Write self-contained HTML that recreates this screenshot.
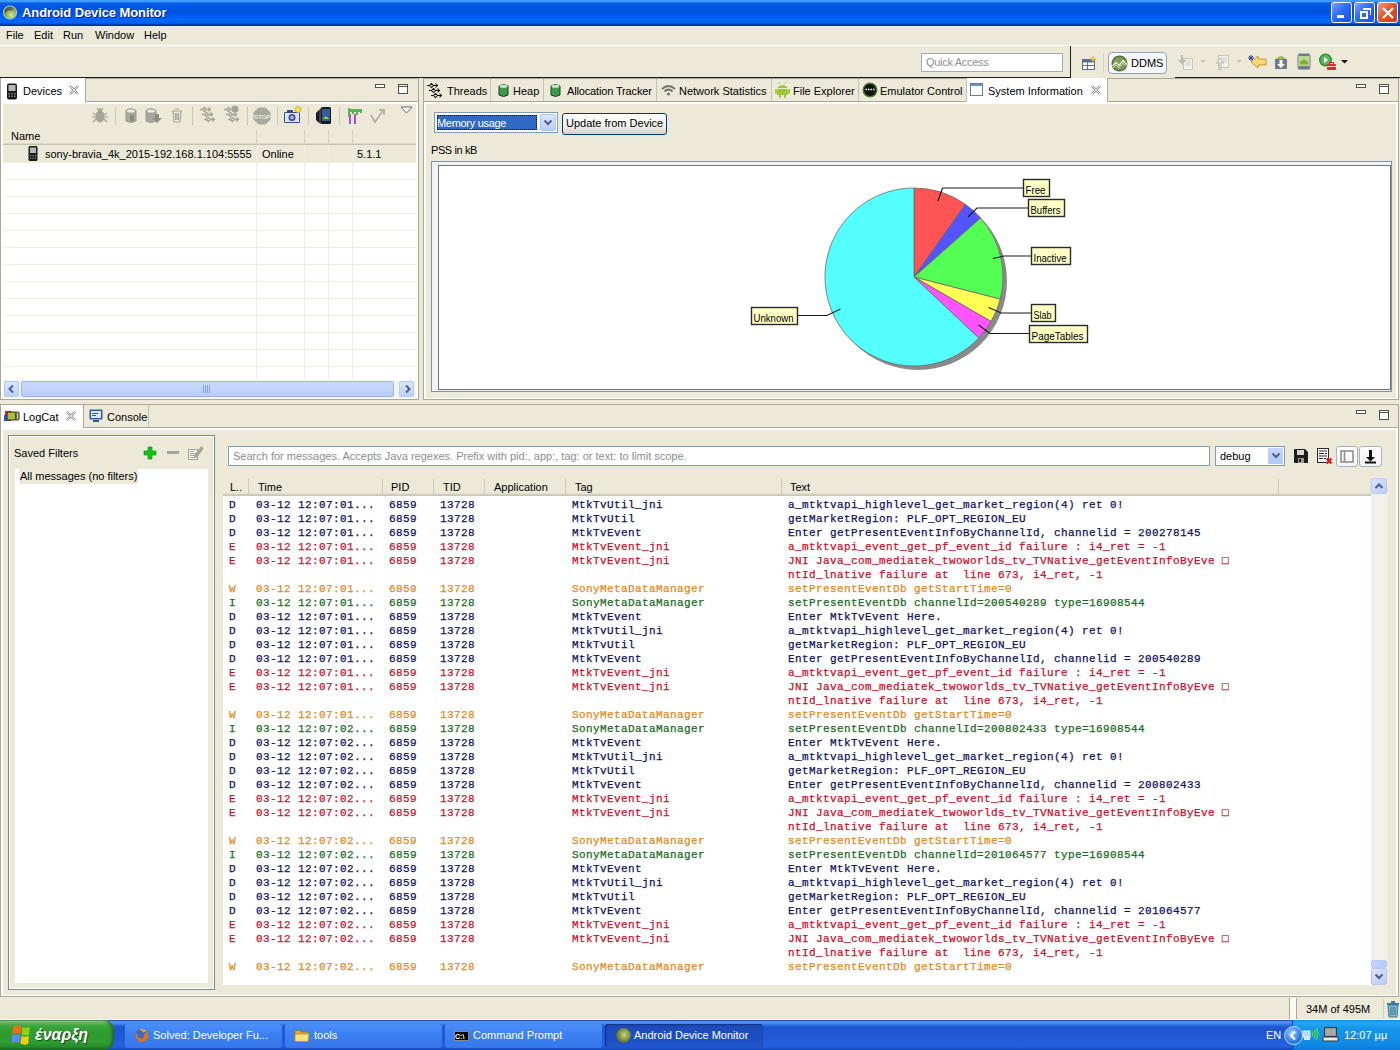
<!DOCTYPE html>
<html><head><meta charset="utf-8">
<style>
*{margin:0;padding:0;box-sizing:border-box}
html,body{width:1400px;height:1050px;overflow:hidden;background:#ECE9D8;font-family:"Liberation Sans",sans-serif;font-size:11px;color:#000;position:relative}
.a{position:absolute}
.t{position:absolute;white-space:nowrap;line-height:13px}
/* title bar */
#title{left:0;top:0;width:1400px;height:26px;background:linear-gradient(#3D9BFF 0px,#3D9BFF 1.5px,#0A60E6 3px,#0057E6 6px,#0052E0 12px,#005AF4 16px,#0066F6 19px,#0562F5 23px,#0046C8 24px,#0030A0 25px,#0030A0 26px)}
#title .tt{left:22px;top:6px;color:#fff;font-weight:bold;font-size:13px;text-shadow:1px 1px 0 #0A1E7A;letter-spacing:-0.1px}
.wb{position:absolute;top:2px;width:21px;height:21px;border:1px solid #fff;border-radius:3px;background:linear-gradient(135deg,#7AA4FF,#2D6CF5 45%,#1C4FE0)}
.wb.c{background:linear-gradient(135deg,#F09A80,#E0532B 50%,#C8401A)}
#menu{left:0;top:26px;width:1400px;height:20px;background:#ECE9D8;border-top:1px solid #F0F2FA;border-bottom:1px solid #fff}
#menu .t{top:2px}
#tb{left:0;top:46px;width:1400px;height:32px;background:#ECE9D8}

.pnl{position:absolute;border:1px solid #ACA899;border-top:none}
.tabrow{position:absolute;left:0;top:0;height:24px;border-bottom:1px solid #ACA899;background:#ECE9D8}
.tab{position:absolute;top:0;height:24px;background:#ECE9D8;border-right:1px solid #ACA899}
.tab.act{background:#fff;height:24px}
.tab .t{top:6px}
.minb{position:absolute;width:10px;height:4px;border:1px solid #505046;background:#fff}
.maxb{position:absolute;width:10px;height:10px;border:1px solid #505046;box-shadow:inset 0 1px 0 #fff,inset 0 2px 0 #505046;background:#fff}
.xx{position:absolute;width:9px;height:9px}
.gl{position:absolute;background:#EFEDE3}

.lc{position:absolute;white-space:pre;font-family:"Liberation Mono",monospace;font-size:11px;line-height:14px;letter-spacing:0.4px;-webkit-text-stroke:0.25px currentColor}
.D{color:#10105C}.E{color:#C8102A}.W{color:#E0891E}.I{color:#1A6A22}
</style></head><body>

<div id="title" class="a">
  <svg class="a" style="left:2px;top:4px" width="16" height="16"><defs><radialGradient id="gi" cx="0.6" cy="0.7" r="0.7"><stop offset="0" stop-color="#D8E8A0"/><stop offset="0.6" stop-color="#8AAA50"/><stop offset="1" stop-color="#2A4A20"/></radialGradient></defs><circle cx="8" cy="8.5" r="6.5" fill="url(#gi)" stroke="#9CD8A8" stroke-width="1.2"/><path d="M3 8Q6 4 10 6" stroke="#5A4A6A" stroke-width="1.5" fill="none"/></svg>
  <div class="t tt">Android Device Monitor</div>
  <div class="wb" style="left:1331px"><div class="a" style="left:5px;top:12px;width:7px;height:3px;background:#fff"></div></div>
  <div class="wb" style="left:1354px"><div class="a" style="left:5px;top:8px;width:8px;height:8px;border:2px solid #fff;border-top-width:2px"></div><div class="a" style="left:8px;top:5px;width:8px;height:7px;border-top:2px solid #fff;border-right:1px solid #fff"></div></div>
  <div class="wb c" style="left:1377px"><svg class="a" style="left:3px;top:3px" width="14" height="14"><path d="M2 2L12 12M12 2L2 12" stroke="#fff" stroke-width="2.2"/></svg></div>
</div>

<div id="menu" class="a">
  <div class="t" style="left:6px">File</div>
  <div class="t" style="left:34px">Edit</div>
  <div class="t" style="left:63px">Run</div>
  <div class="t" style="left:95px">Window</div>
  <div class="t" style="left:144px">Help</div>
</div>

<div id="tb" class="a">
  <div class="a" style="left:921px;top:7px;width:142px;height:19px;background:#fff;border:1px solid #A5ACB5"></div>
  <div class="t" style="left:926px;top:10px;color:#8F8F8F;letter-spacing:-0.3px">Quick Access</div>
  <div class="a" style="left:1070px;top:0px;width:1px;height:31px;background:#1A1A1A"></div>
  <svg class="a" style="left:1081px;top:10px" width="16" height="15"><rect x="1.5" y="3.5" width="12" height="10" fill="#fff" stroke="#6D6D6D"/><rect x="2" y="4" width="11" height="2.5" fill="#4A6FA8"/><path d="M1.5 9.5H13.5M6.5 6.5V13.5" stroke="#6D6D6D"/><path d="M12 0.5L13 2.5L15 3L13 3.8L12 6L11 3.8L9 3L11 2.5Z" fill="#F5D050" stroke="#D9A020" stroke-width="0.6"/></svg>
  <div class="a" style="left:1103px;top:7px;width:1px;height:20px;background:#D5D2C4"></div>
  <div class="a" style="left:1108px;top:6px;width:59px;height:22px;border:1px solid #94A2B8;border-radius:4px;background:#F6F8FB"></div>
  <svg class="a" style="left:1111px;top:9px" width="17" height="17"><circle cx="8.5" cy="8.5" r="8" fill="#4E6A2E"/><circle cx="8.5" cy="8.5" r="6.8" fill="#7D9A5A"/><path d="M1.5 11L5 7.5L8 10.5L12 5.5L16 9.5" stroke="#E8F0D8" stroke-width="1.3" fill="none"/><path d="M1.5 13.5L5 10L8 13L12 8L15.5 11.5" stroke="#C8D8B0" stroke-width="1" fill="none"/></svg>
  <div class="t" style="left:1131px;top:11px">DDMS</div>
  <svg class="a" style="left:1178px;top:8px" width="16" height="17"><rect x="5.5" y="4.5" width="9" height="11" fill="#F3F2EC" stroke="#C9C8BD"/><path d="M7 7H13M7 9H13M7 11H13" stroke="#D3D2C8"/><path d="M4 1V9L1 6M4 9L7 6" stroke="#BDBCB0" stroke-width="2" fill="none"/></svg>
  <svg class="a" style="left:1200px;top:14px" width="6" height="4"><path d="M0 0H6L3 3Z" fill="#C7C6BB"/></svg>
  <svg class="a" style="left:1214px;top:8px" width="16" height="17"><rect x="4.5" y="1.5" width="10" height="12" fill="#F3F2EC" stroke="#C9C8BD"/><path d="M7 4H13M7 6H13M7 8H13" stroke="#D3D2C8"/><path d="M5 16V9H2L6 4L10 9H7V16Z" fill="#E5E4DC" stroke="#BDBCB0"/></svg>
  <svg class="a" style="left:1236px;top:14px" width="6" height="4"><path d="M0 0H6L3 3Z" fill="#C7C6BB"/></svg>
  <svg class="a" style="left:1248px;top:9px" width="19" height="14"><path d="M18 4H10V1L3 7L10 13V10H18Z" fill="#F8D878" stroke="#C89A28" stroke-width="1"/><path d="M1 1L5 5M5 1L1 5M3 0V6M0 3H6" stroke="#2A3A9A" stroke-width="1"/></svg>
  <svg class="a" style="left:1274px;top:7px" width="14" height="17"><path d="M2 6Q7 0 12 6Z" fill="#9CC43C"/><rect x="1" y="6" width="12" height="10" fill="#6D7B8A"/><path d="M5.5 7H8.5V11H11L7 15L3 11H5.5Z" fill="#fff"/></svg>
  <svg class="a" style="left:1297px;top:7px" width="14" height="17"><rect x="0.5" y="0.5" width="13" height="16" rx="2" fill="#6D7B8A"/><rect x="2" y="3" width="10" height="10" fill="#BCD88A"/><path d="M3 9Q7 4 11 9Z" fill="#7FAE2A"/><rect x="3" y="9" width="8" height="2.5" fill="#7FAE2A"/><path d="M1 2H2M1 4H2M1 6H2M1 8H2M1 10H2M1 12H2M1 14H2M12 2H13M12 4H13M12 6H13M12 8H13M12 10H13M12 12H13M12 14H13" stroke="#DDD"/></svg>
  <svg class="a" style="left:1319px;top:7px" width="18" height="18"><circle cx="6.5" cy="7" r="6.5" fill="#2E8A3A"/><circle cx="6.5" cy="7" r="5" fill="#5AB85A"/><path d="M5 4L9 7L5 10Z" fill="#fff"/><rect x="8" y="11" width="9" height="6" rx="1" fill="#D82C2C"/><rect x="10.5" y="9.5" width="4" height="2" fill="none" stroke="#D82C2C"/><path d="M8 13.5H17" stroke="#fff" stroke-width="0.8"/></svg>
  <svg class="a" style="left:1341px;top:14px" width="7" height="4"><path d="M0 0H7L3.5 3.5Z" fill="#111"/></svg>
</div>


<!-- DEVICES PANEL -->
<div class="a" style="left:0;top:77px;width:1071px;height:1px;background:#1A1A1A"></div><div class="a" style="left:1175px;top:77px;width:225px;height:1px;background:#1A1A1A"></div>
<div class="a" style="left:0;top:78px;width:419px;height:322px;background:#ECE9D8">
  <div class="a" style="left:0;top:0;width:1px;height:322px;background:#ACA899"></div>
  <div class="a" style="left:418px;top:0;width:1px;height:322px;background:#ACA899"></div><div class="a" style="left:0;top:321px;width:419px;height:1px;background:#ACA899"></div>
  <div class="a" style="left:0;top:23px;width:419px;height:1px;background:#ACA899"></div>
  <div class="a" style="left:86px;top:0;width:333px;height:1px;background:#ACA899"></div><div class="a" style="left:1px;top:0;width:85px;height:24px;background:#fff;border-right:1px solid #ACA899"></div>
  <svg class="a" style="left:6px;top:5px" width="12" height="17"><rect x="1" y="0.5" width="10" height="16" rx="2" fill="#1a1a1a"/><rect x="2.5" y="2" width="7" height="6" fill="#B8B8B8"/><g fill="#888"><rect x="2.5" y="10" width="1.5" height="1.5"/><rect x="5.2" y="10" width="1.5" height="1.5"/><rect x="8" y="10" width="1.5" height="1.5"/><rect x="2.5" y="12.5" width="1.5" height="1.5"/><rect x="5.2" y="12.5" width="1.5" height="1.5"/><rect x="8" y="12.5" width="1.5" height="1.5"/></g></svg>
  <div class="t" style="left:23px;top:7px">Devices</div>
  <svg class="a" style="left:69px;top:7px" width="10" height="10"><path d="M1 1L9 9M9 1L1 9" stroke="#8A8A8A" stroke-width="2.4"/><path d="M1 1L9 9M9 1L1 9" stroke="#fff" stroke-width="0.9"/></svg>
  <div class="minb" style="left:375px;top:6px"></div>
  <div class="maxb" style="left:398px;top:6px"></div>
  <!-- content -->
  <div class="a" style="left:1px;top:24px;width:417px;height:297px;background:#FDFDFB"></div><div class="a" style="left:3px;top:26px;width:413px;height:294px;background:#ECE9D8"></div>
  <div id="devtb">
  <svg class="a" style="left:91px;top:29px" width="18" height="17"><g fill="#A4A396"><ellipse cx="9" cy="9.5" rx="4.5" ry="6"/><circle cx="9" cy="3.5" r="2.2"/></g><g stroke="#A4A396" stroke-width="1.2"><path d="M2 6L5 8M16 6L13 8M1 10H5M17 10H13M2 15L5 12M16 15L13 12M6 1L7.5 3M12 1L10.5 3"/></g></svg>
  <div class="a" style="left:115px;top:29px;width:1px;height:18px;background:#C9C6B8"></div>
  <svg class="a" style="left:124px;top:29px" width="14" height="17"><g fill="#A9A89C" stroke="#9A998C"><path d="M2 3.5Q7 0 12 3.5V14Q7 17 2 14Z"/></g><ellipse cx="7" cy="4" rx="4" ry="1.6" fill="#ECEBE3"/><rect x="6" y="8" width="4" height="6" fill="#8C8B7E"/></svg>
  <svg class="a" style="left:144px;top:29px" width="20" height="17"><g fill="#A9A89C" stroke="#9A998C"><path d="M2 3.5Q7 0 12 3.5V14Q7 17 2 14Z"/></g><ellipse cx="7" cy="4" rx="4" ry="1.6" fill="#ECEBE3"/><path d="M11 7H15V11H18L13 16L8 11H11Z" fill="#8E8D80"/></svg>
  <svg class="a" style="left:170px;top:29px" width="14" height="17"><g fill="none" stroke="#A9A89C" stroke-width="1.2"><path d="M2 4H12M3 4L4 15H10L11 4M5 2H9M5.5 6V13M7 6V13M8.5 6V13"/></g></svg>
  <div class="a" style="left:192px;top:29px;width:1px;height:18px;background:#C9C6B8"></div>
  <svg class="a" style="left:197px;top:26px" width="20" height="20"><path d="M3 5.5H5.5M5.5 5.5L7.5 3.5L9.5 5.5L7.5 7.5ZM9.5 5.5H14M11.5 3.5L13.5 5.5L11.5 7.5M5 10.5H7.5M7.5 10.5L9.5 8.5L11.5 10.5L9.5 12.5ZM11.5 10.5H16M13.5 8.5L15.5 10.5L13.5 12.5M7 15.5H9.5M9.5 15.5L11.5 13.5L13.5 15.5L11.5 17.5ZM13.5 15.5H18M15.5 13.5L17.5 15.5L15.5 17.5" fill="none" stroke="#A4A396" stroke-width="1.3"/></svg>
  <svg class="a" style="left:221px;top:26px" width="20" height="20"><path d="M3 5.5H5.5M5.5 5.5L7.5 3.5L9.5 5.5L7.5 7.5ZM9.5 5.5H14M11.5 3.5L13.5 5.5L11.5 7.5M5 10.5H7.5M7.5 10.5L9.5 8.5L11.5 10.5L9.5 12.5ZM11.5 10.5H16M13.5 8.5L15.5 10.5L13.5 12.5M7 15.5H9.5M9.5 15.5L11.5 13.5L13.5 15.5L11.5 17.5ZM13.5 15.5H18M15.5 13.5L17.5 15.5L15.5 17.5" fill="none" stroke="#A4A396" stroke-width="1.3"/><circle cx="14" cy="5" r="3.6" fill="#A4A396"/></svg>
  <div class="a" style="left:247px;top:29px;width:1px;height:18px;background:#C9C6B8"></div>
  <svg class="a" style="left:253px;top:29px" width="18" height="18"><path d="M5.5 0.5H12.5L17.5 5.5V12.5L12.5 17.5H5.5L0.5 12.5V5.5Z" fill="#A9A89C"/><text x="9" y="11.5" font-size="6" font-weight="bold" fill="#E8E7DF" text-anchor="middle" font-family="Liberation Sans">STOP</text></svg>
  <div class="a" style="left:277px;top:29px;width:1px;height:18px;background:#C9C6B8"></div>
  <svg class="a" style="left:283px;top:28px" width="19" height="18"><rect x="1" y="6" width="16" height="11" rx="1.5" fill="#3A4A8C"/><rect x="2" y="7" width="14" height="9" fill="#DDE2F2"/><circle cx="9" cy="11.5" r="3.5" fill="#3A4A8C"/><circle cx="9" cy="11.5" r="2" fill="#9CB2E4"/><rect x="4" y="4" width="6" height="2" fill="#3A4A8C"/><circle cx="15" cy="3.5" r="3" fill="#F2E24A" stroke="#C9A820" stroke-width="0.8"/></svg>
  <div class="a" style="left:308px;top:29px;width:1px;height:18px;background:#C9C6B8"></div>
  <svg class="a" style="left:315px;top:28px" width="17" height="19"><path d="M4 4L1 7V14L4 17Z" fill="#1E1E1E"/><path d="M6 2L4 4V17L6 18Z" fill="#444"/><rect x="6" y="1" width="10" height="17" rx="1.5" fill="#1A1A1A"/><rect x="7" y="3" width="8" height="12" fill="#2E5E9E"/><path d="M8 13Q11 8 14 13Z" fill="#9BD13C"/></svg>
  <div class="a" style="left:339px;top:29px;width:1px;height:18px;background:#C9C6B8"></div>
  <svg class="a" style="left:347px;top:29px" width="16" height="17"><g fill="#A64FCF"><rect x="2" y="7" width="2" height="10"/><rect x="7" y="7" width="2" height="10"/></g><g fill="#5AB25A"><rect x="1" y="2" width="14" height="3"/><rect x="1" y="1" width="2" height="9"/><rect x="5" y="2" width="2" height="5"/><rect x="9" y="2" width="2" height="6"/><rect x="13" y="2" width="2" height="4"/></g></svg>
  <svg class="a" style="left:369px;top:29px" width="17" height="17"><path d="M2 8L6 15L15 2M10 3H15V8" fill="none" stroke="#B5B4A8" stroke-width="1.8"/></svg>
  <svg class="a" style="left:400px;top:28px" width="13" height="8"><path d="M1 1H12L6.5 7Z" fill="#fff" stroke="#6B6B6B" stroke-width="1"/></svg>
</div>
  <!-- table -->
  <div class="a" style="left:3px;top:67px;width:413px;height:235px;background:#fff"></div>
  <div class="a" style="left:3px;top:50px;width:413px;height:17px;background:linear-gradient(#ECE9D8 0,#ECE9D8 15px,#DCD8C8 15px,#DCD8C8 16px,#C5C1B0 16px)"></div>
  <div class="t" style="left:11px;top:52px">Name</div>
  <div class="a" style="left:3px;top:67px;width:413px;height:17px;background:#ECE9D8"></div>
  <svg class="a" style="left:28px;top:68px" width="10" height="15"><rect x="0.5" y="0" width="9" height="15" rx="1.5" fill="#1a1a1a"/><rect x="2" y="1.5" width="6" height="5.5" fill="#B8B8B8"/><g fill="#888"><rect x="2" y="9" width="1.3" height="1.3"/><rect x="4.4" y="9" width="1.3" height="1.3"/><rect x="6.8" y="9" width="1.3" height="1.3"/><rect x="2" y="11.5" width="1.3" height="1.3"/><rect x="4.4" y="11.5" width="1.3" height="1.3"/><rect x="6.8" y="11.5" width="1.3" height="1.3"/></g></svg>
  <div class="t" style="left:45px;top:70px">sony-bravia_4k_2015-192.168.1.104:5555</div>
  <div class="t" style="left:262px;top:70px">Online</div>
  <div class="t" style="left:357px;top:70px">5.1.1</div>
  <div class="gl" style="left:3px;top:84px;width:413px;height:1px"></div>
<div class="gl" style="left:3px;top:101px;width:413px;height:1px"></div>
<div class="gl" style="left:3px;top:118px;width:413px;height:1px"></div>
<div class="gl" style="left:3px;top:135px;width:413px;height:1px"></div>
<div class="gl" style="left:3px;top:152px;width:413px;height:1px"></div>
<div class="gl" style="left:3px;top:169px;width:413px;height:1px"></div>
<div class="gl" style="left:3px;top:186px;width:413px;height:1px"></div>
<div class="gl" style="left:3px;top:203px;width:413px;height:1px"></div>
<div class="gl" style="left:3px;top:220px;width:413px;height:1px"></div>
<div class="gl" style="left:3px;top:237px;width:413px;height:1px"></div>
<div class="gl" style="left:3px;top:254px;width:413px;height:1px"></div>
<div class="gl" style="left:3px;top:271px;width:413px;height:1px"></div>
<div class="gl" style="left:3px;top:288px;width:413px;height:1px"></div>
<div class="gl" style="left:256px;top:67px;width:1px;height:235px"></div>
<div class="a" style="left:256px;top:52px;width:1px;height:13px;background:#D5D1C0"></div>
<div class="gl" style="left:304px;top:67px;width:1px;height:235px"></div>
<div class="a" style="left:304px;top:52px;width:1px;height:13px;background:#D5D1C0"></div>
<div class="gl" style="left:328px;top:67px;width:1px;height:235px"></div>
<div class="a" style="left:328px;top:52px;width:1px;height:13px;background:#D5D1C0"></div>
<div class="gl" style="left:352px;top:67px;width:1px;height:235px"></div>
<div class="a" style="left:352px;top:52px;width:1px;height:13px;background:#D5D1C0"></div>

  <!-- h scrollbar -->
  <div class="a" style="left:3px;top:302px;width:413px;height:18px;background:#F5F4EA"></div>
  <div class="a" style="left:4px;top:303px;width:15px;height:16px;border-radius:2px;background:linear-gradient(#DAE6FE,#BCD0F8);border:1px solid #B6C9F0"></div>
  <svg class="a" style="left:7px;top:306px" width="9" height="10"><path d="M6 1.5L2.5 5L6 8.5" stroke="#4D6185" stroke-width="2" fill="none"/></svg>
  <div class="a" style="left:21px;top:303px;width:373px;height:16px;border-radius:2px;background:linear-gradient(#C8D8FB,#B9CEF7);border:1px solid #9DB6EA"></div>
  <svg class="a" style="left:202px;top:307px" width="9" height="8"><path d="M1.5 0V8M3.5 0V8M5.5 0V8M7.5 0V8" stroke="#8AA5DB" stroke-width="1"/></svg>
  <div class="a" style="left:399px;top:303px;width:15px;height:16px;border-radius:2px;background:linear-gradient(#DAE6FE,#BCD0F8);border:1px solid #B6C9F0"></div>
  <svg class="a" style="left:403px;top:306px" width="9" height="10"><path d="M3 1.5L6.5 5L3 8.5" stroke="#4D6185" stroke-width="2" fill="none"/></svg>
</div>

<!-- SYSTEM INFO PANEL -->
<div class="a" style="left:423px;top:78px;width:976px;height:322px;background:#ECE9D8">
  <div class="a" style="left:0;top:0;width:1px;height:322px;background:#ACA899"></div>
  <div class="a" style="left:975px;top:0;width:1px;height:322px;background:#ACA899"></div><div class="a" style="left:0;top:321px;width:976px;height:1px;background:#ACA899"></div>
  <div class="a" style="left:0;top:23px;width:976px;height:1px;background:#ACA899"></div><div class="a" style="left:0;top:0;width:976px;height:1px;background:#ACA899"></div>
  <div class="a" style="left:67px;top:1px;width:1px;height:22px;background:#C5C2B2"></div>
  <div class="a" style="left:120px;top:1px;width:1px;height:22px;background:#C5C2B2"></div>
  <div class="a" style="left:233px;top:1px;width:1px;height:22px;background:#C5C2B2"></div>
  <div class="a" style="left:348px;top:1px;width:1px;height:22px;background:#C5C2B2"></div>
  <div class="a" style="left:435px;top:1px;width:1px;height:22px;background:#C5C2B2"></div>
  <div class="a" style="left:543px;top:0px;width:142px;height:24px;background:#fff;border-left:1px solid #C5C2B2;border-right:1px solid #ACA899"></div>
  <!-- threads icon -->
  <svg class="a" style="left:1px;top:2px" width="22" height="20"><path d="M3 5.5H5.5M5.5 5.5L7.5 3.5L9.5 5.5L7.5 7.5ZM9.5 5.5H14M11.5 3.5L13.5 5.5L11.5 7.5M5 10.5H7.5M7.5 10.5L9.5 8.5L11.5 10.5L9.5 12.5ZM11.5 10.5H16M13.5 8.5L15.5 10.5L13.5 12.5M7 15.5H9.5M9.5 15.5L11.5 13.5L13.5 15.5L11.5 17.5ZM13.5 15.5H18M15.5 13.5L17.5 15.5L15.5 17.5" fill="none" stroke="#111" stroke-width="1.05"/></svg>
  <div class="t" style="left:24px;top:7px">Threads</div>
  <svg class="a" style="left:75px;top:5px" width="11" height="15"><path d="M1 3Q5.5 0 10 3V12Q5.5 15 1 12Z" fill="#3D9A4A" stroke="#1F3F23"/><ellipse cx="5.5" cy="3.2" rx="4" ry="1.5" fill="#CDE9C9"/></svg>
  <div class="t" style="left:90px;top:7px">Heap</div>
  <svg class="a" style="left:127px;top:5px" width="11" height="15"><path d="M1 3Q5.5 0 10 3V12Q5.5 15 1 12Z" fill="#3D9A4A" stroke="#1F3F23"/><ellipse cx="5.5" cy="3.2" rx="4" ry="1.5" fill="#CDE9C9"/></svg>
  <div class="t" style="left:144px;top:7px;letter-spacing:-0.15px">Allocation Tracker</div>
  <svg class="a" style="left:238px;top:6px" width="15" height="12"><g fill="none" stroke="#6F6F6F" stroke-width="1.8"><path d="M1 5Q7.5 -1 14 5M3.5 7.5Q7.5 3.5 11.5 7.5"/></g><circle cx="7.5" cy="10" r="1.6" fill="#6F6F6F"/></svg>
  <div class="t" style="left:256px;top:7px">Network Statistics</div>
  <svg class="a" style="left:352px;top:3px" width="15" height="17"><g fill="#9CC63C"><path d="M2 7Q7.5 1 13 7Z"/><rect x="2" y="8" width="11" height="6" rx="1"/><rect x="0" y="8" width="1.8" height="5" rx="0.9"/><rect x="13.2" y="8" width="1.8" height="5" rx="0.9"/><rect x="4" y="13" width="2" height="4" rx="1"/><rect x="9" y="13" width="2" height="4" rx="1"/></g><path d="M4 1L5 3M11 1L10 3" stroke="#9CC63C"/></svg>
  <div class="t" style="left:370px;top:7px">File Explorer</div>
  <svg class="a" style="left:439px;top:4px" width="16" height="16"><circle cx="8" cy="8" r="7.5" fill="#4E7A2C"/><circle cx="8" cy="8" r="6" fill="#111"/><path d="M3.5 7.5H12.5" stroke="#fff" stroke-width="1.4" stroke-dasharray="1.5 1"/></svg>
  <div class="t" style="left:457px;top:7px">Emulator Control</div>
  <svg class="a" style="left:547px;top:5px" width="14" height="14"><rect x="0.5" y="0.5" width="12" height="12" fill="#fff" stroke="#5E7FA8"/><rect x="1" y="1" width="11" height="2" fill="#6D8FBE"/></svg>
  <div class="t" style="left:565px;top:7px">System Information</div>
  <svg class="a" style="left:668px;top:7px" width="10" height="10"><path d="M1 1L9 9M9 1L1 9" stroke="#8A8A8A" stroke-width="2.4"/><path d="M1 1L9 9M9 1L1 9" stroke="#fff" stroke-width="0.9"/></svg>
  <div class="minb" style="left:933px;top:6px"></div>
  <div class="maxb" style="left:956px;top:6px"></div>
  <div class="a" style="left:1px;top:24px;width:974px;height:297px;background:#FDFDFB"></div>
  <div class="a" style="left:3px;top:26px;width:970px;height:294px;background:#ECE9D8"></div>
  <!-- combo -->
  <div class="a" style="left:11px;top:34px;width:124px;height:21px;background:#fff;border:1px solid #7F9DB9"></div>
  <div class="a" style="left:14px;top:37px;width:100px;height:15px;background:#316AC5;outline:1px dotted #000;outline-offset:-1px"></div>
  <div class="t" style="left:14px;top:39px;color:#fff;letter-spacing:-0.3px">Memory usage</div>
  <div class="a" style="left:117px;top:36px;width:16px;height:17px;border-radius:2px;background:linear-gradient(#DCE7FE,#B9CDF8);border:1px solid #B4C6EE"></div>
  <svg class="a" style="left:120px;top:41px" width="10" height="8"><path d="M1.5 1.5L5 5L8.5 1.5" stroke="#4D6185" stroke-width="2" fill="none"/></svg>
  <div class="a" style="left:139px;top:35px;width:105px;height:22px;border:1px solid #003C74;border-radius:3px;background:linear-gradient(#FFFFFF,#F0F0EA 60%,#D6D0C5)"></div>
  <div class="t" style="left:143px;top:39px">Update from Device</div>
  <div class="t" style="left:8px;top:66px;letter-spacing:-0.4px">PSS in kB</div>
  <!-- chart frame -->
  <div class="a" style="left:8px;top:83px;width:961px;height:231px;border:1px solid #8592A6;background:#F1F3F6"></div>
  <div class="a" style="left:15px;top:87px;width:953px;height:225px;border:1px solid #6E737C;background:#fff"></div>
</div>

<!-- LOGCAT PANEL -->
<div class="a" style="left:0;top:404px;width:1400px;height:593px;background:#ECE9D8">
  <div class="a" style="left:0;top:0;width:1px;height:593px;background:#ACA899"></div>
  <div class="a" style="left:1398px;top:0;width:1px;height:593px;background:#ACA899"></div>
  <div class="a" style="left:0;top:592px;width:1399px;height:1px;background:#ACA899"></div>
  <div class="a" style="left:0;top:0;width:1399px;height:1px;background:#ACA899"></div>
  <div class="a" style="left:0;top:23px;width:1399px;height:1px;background:#ACA899"></div>
  <div class="a" style="left:1px;top:1px;width:83px;height:23px;background:#fff;border-right:1px solid #ACA899"></div>
  <div class="a" style="left:148px;top:1px;width:1px;height:22px;background:#C5C2B2"></div>
  <svg class="a" style="left:4px;top:6px" width="16" height="12"><rect x="1" y="1" width="6" height="10" fill="#D92020"/><rect x="0" y="5" width="4" height="6" fill="#2A52C8"/><rect x="3" y="2" width="9" height="8" rx="1" fill="#A4C23A" stroke="#222"/><rect x="12" y="2" width="3" height="8" rx="1" fill="#D9C27A" stroke="#222"/></svg>
  <div class="t" style="left:23px;top:7px">LogCat</div>
  <svg class="a" style="left:66px;top:7px" width="10" height="10"><path d="M1 1L9 9M9 1L1 9" stroke="#8A8A8A" stroke-width="2.4"/><path d="M1 1L9 9M9 1L1 9" stroke="#fff" stroke-width="0.9"/></svg>
  <svg class="a" style="left:89px;top:5px" width="14" height="14"><rect x="0.5" y="0.5" width="13" height="10" rx="1" fill="#2B5FA8"/><rect x="2" y="2" width="10" height="7" fill="#DCE6F4"/><rect x="3" y="4" width="6" height="1" fill="#2B5FA8"/><rect x="3" y="6" width="4" height="1" fill="#2B5FA8"/><rect x="4" y="11" width="6" height="2" fill="#2B5FA8"/></svg>
  <div class="t" style="left:107px;top:7px">Console</div>
  <div class="minb" style="left:1356px;top:6px"></div>
  <div class="maxb" style="left:1379px;top:6px"></div>
  <div class="a" style="left:1px;top:24px;width:1397px;height:568px;background:#FDFDFB"></div>
  <div class="a" style="left:3px;top:26px;width:1393px;height:565px;background:#ECE9D8"></div>
  <!-- saved filters -->
  <div class="a" style="left:8px;top:31px;width:207px;height:555px;border:1px solid #7E8691;box-shadow:inset 1px 1px 0 #fff,inset -1px -1px 0 #fff"></div>
  <div class="t" style="left:14px;top:43px">Saved Filters</div>
  <svg class="a" style="left:143px;top:42px" width="14" height="14"><path d="M5 1H9V5H13V9H9V13H5V9H1V5H5Z" fill="#17C117" stroke="#0A8A0A" stroke-width="0.6"/></svg>
  <div class="a" style="left:167px;top:47px;width:12px;height:3px;background:#A5A498"></div>
  <svg class="a" style="left:187px;top:40px" width="18" height="18"><rect x="1.5" y="5.5" width="9" height="10" fill="#F4F3EC" stroke="#A5A498"/><path d="M3 7.5H7M3 9.5H9M3 11.5H9M3 13.5H8" stroke="#A5A498"/><path d="M9 12L14.5 4.5" stroke="#A5A498" stroke-width="3.6" stroke-linecap="round"/></svg>
  <div class="a" style="left:15px;top:65px;width:193px;height:514px;background:#fff"></div>
  <div class="a" style="left:19px;top:65px;width:119px;height:15px;background:#ECE9D8"></div>
  <div class="t" style="left:20px;top:66px">All messages (no filters)</div>
  <!-- search -->
  <div class="a" style="left:228px;top:42px;width:982px;height:20px;background:#fff;border:1px solid #7F9DB9"></div>
  <div class="t" style="left:233px;top:46px;color:#8D8D8D">Search for messages. Accepts Java regexes. Prefix with pid:, app:, tag: or text: to limit scope.</div>
  <div class="a" style="left:1215px;top:42px;width:70px;height:20px;background:#fff;border:1px solid #7F9DB9"></div>
  <div class="t" style="left:1220px;top:46px">debug</div>
  <div class="a" style="left:1268px;top:44px;width:15px;height:16px;border-radius:1px;background:linear-gradient(#C6D6FA,#B3C8F5)"></div>
  <svg class="a" style="left:1271px;top:48px" width="10" height="8"><path d="M1.5 1.5L5 5L8.5 1.5" stroke="#4D6185" stroke-width="2" fill="none"/></svg>
  <svg class="a" style="left:1293px;top:44px" width="16" height="16"><path d="M1 2Q1 1 2 1H12L15 4V14Q15 15 14 15H2Q1 15 1 14Z" fill="#1E1E1E"/><rect x="4" y="2" width="7" height="5" fill="#D8D8D8"/><rect x="5" y="10" width="6" height="5" fill="#9A9A9A"/><rect x="6" y="11" width="2" height="3" fill="#1E1E1E"/></svg>
  <svg class="a" style="left:1316px;top:43px" width="17" height="18"><rect x="1.5" y="1.5" width="11" height="14" fill="#fff" stroke="#2A2A2A"/><path d="M3 4H11M3 6.5H8M9 6.5H11M3 9H11M3 11.5H7M8 11.5H10" stroke="#2A2A2A" stroke-width="1.2"/><path d="M10.5 11.5L15.5 16.5M15.5 11.5L10.5 16.5" stroke="#E01818" stroke-width="2.2"/></svg>
  <div class="a" style="left:1336px;top:42px;width:22px;height:21px;border:1px solid #A7B1C2;border-radius:3px;background:linear-gradient(#FFFFFF,#F2F2F2)"></div>
  <svg class="a" style="left:1340px;top:46px" width="14" height="13"><rect x="1" y="1" width="12" height="11" fill="none" stroke="#8F8F8F" stroke-width="1.6"/><path d="M4.5 1V12" stroke="#8F8F8F" stroke-width="1.6"/></svg>
  <div class="a" style="left:1359px;top:42px;width:23px;height:21px;border:1px solid #A7B1C2;border-radius:3px;background:linear-gradient(#FFFFFF,#F2F2F2)"></div>
  <svg class="a" style="left:1363px;top:45px" width="15" height="15"><path d="M6 1H9V8H12L7.5 12.5L3 8H6Z" fill="#111"/><rect x="2" y="12.5" width="11" height="2" fill="#111"/></svg>
  <!-- table header -->
  <div class="a" style="left:223px;top:73px;width:1148px;height:19px;background:linear-gradient(#ECE9D8 0,#ECE9D8 16px,#D8D4C4 17px,#C5C1B0 19px)"></div>
  <div class="t" style="left:230px;top:77px">L..</div><div class="t" style="left:258px;top:77px">Time</div><div class="t" style="left:391px;top:77px">PID</div><div class="t" style="left:443px;top:77px">TID</div><div class="t" style="left:494px;top:77px">Application</div><div class="t" style="left:575px;top:77px">Tag</div><div class="t" style="left:790px;top:77px">Text</div><div class="a" style="left:248px;top:75px;width:1px;height:15px;background:#CFCBBA"></div><div class="a" style="left:382px;top:75px;width:1px;height:15px;background:#CFCBBA"></div><div class="a" style="left:433px;top:75px;width:1px;height:15px;background:#CFCBBA"></div><div class="a" style="left:484px;top:75px;width:1px;height:15px;background:#CFCBBA"></div><div class="a" style="left:565px;top:75px;width:1px;height:15px;background:#CFCBBA"></div><div class="a" style="left:781px;top:75px;width:1px;height:15px;background:#CFCBBA"></div><div class="a" style="left:1278px;top:75px;width:1px;height:15px;background:#CFCBBA"></div>
  <div class="a" style="left:223px;top:92px;width:1148px;height:489px;background:#fff"></div>
  <!-- v scrollbar -->
  <div class="a" style="left:1371px;top:73px;width:16px;height:508px;background:#F3F1EA"></div>
  <div class="a" style="left:1371px;top:74px;width:16px;height:16px;border:1px solid #B8C8EE;border-radius:2px;background:linear-gradient(135deg,#DCE6FD,#B8CCF6)"></div>
  <svg class="a" style="left:1374px;top:78px" width="10" height="8"><path d="M1.5 6L5 2.5L8.5 6" stroke="#4D6185" stroke-width="2" fill="none"/></svg>
  <div class="a" style="left:1371px;top:556px;width:16px;height:8px;border:1px solid #B8C8EE;border-radius:2px;background:linear-gradient(90deg,#C6D5F8,#B7CBF5)"></div>
  <div class="a" style="left:1371px;top:564px;width:16px;height:17px;border:1px solid #B8C8EE;border-radius:2px;background:linear-gradient(135deg,#DCE6FD,#B8CCF6)"></div>
  <svg class="a" style="left:1374px;top:569px" width="10" height="8"><path d="M1.5 1.5L5 5L8.5 1.5" stroke="#4D6185" stroke-width="2" fill="none"/></svg>
  <div class="lc D" style="left:229px;top:94px">D</div><div class="lc D" style="left:256px;top:94px">03-12 12:07:01...</div><div class="lc D" style="left:389px;top:94px">6859</div><div class="lc D" style="left:440px;top:94px">13728</div><div class="lc D" style="left:572px;top:94px">MtkTvUtil_jni</div><div class="lc D" style="left:788px;top:94px">a_mtktvapi_highlevel_get_market_region(4) ret 0!</div>
<div class="lc D" style="left:229px;top:108px">D</div><div class="lc D" style="left:256px;top:108px">03-12 12:07:01...</div><div class="lc D" style="left:389px;top:108px">6859</div><div class="lc D" style="left:440px;top:108px">13728</div><div class="lc D" style="left:572px;top:108px">MtkTvUtil</div><div class="lc D" style="left:788px;top:108px">getMarketRegion: PLF_OPT_REGION_EU</div>
<div class="lc D" style="left:229px;top:122px">D</div><div class="lc D" style="left:256px;top:122px">03-12 12:07:01...</div><div class="lc D" style="left:389px;top:122px">6859</div><div class="lc D" style="left:440px;top:122px">13728</div><div class="lc D" style="left:572px;top:122px">MtkTvEvent</div><div class="lc D" style="left:788px;top:122px">Enter getPresentEventInfoByChannelId, channelid = 200278145</div>
<div class="lc E" style="left:229px;top:136px">E</div><div class="lc E" style="left:256px;top:136px">03-12 12:07:01...</div><div class="lc E" style="left:389px;top:136px">6859</div><div class="lc E" style="left:440px;top:136px">13728</div><div class="lc E" style="left:572px;top:136px">MtkTvEvent_jni</div><div class="lc E" style="left:788px;top:136px">a_mtktvapi_event_get_pf_event_id failure : i4_ret = -1</div>
<div class="lc E" style="left:229px;top:150px">E</div><div class="lc E" style="left:256px;top:150px">03-12 12:07:01...</div><div class="lc E" style="left:389px;top:150px">6859</div><div class="lc E" style="left:440px;top:150px">13728</div><div class="lc E" style="left:572px;top:150px">MtkTvEvent_jni</div><div class="lc E" style="left:788px;top:150px">JNI Java_com_mediatek_twoworlds_tv_TVNative_getEventInfoByEve □</div>
<div class="lc E" style="left:788px;top:164px">ntId_lnative failure at  line 673, i4_ret, -1</div>
<div class="lc W" style="left:229px;top:178px">W</div><div class="lc W" style="left:256px;top:178px">03-12 12:07:01...</div><div class="lc W" style="left:389px;top:178px">6859</div><div class="lc W" style="left:440px;top:178px">13728</div><div class="lc W" style="left:572px;top:178px">SonyMetaDataManager</div><div class="lc W" style="left:788px;top:178px">setPresentEventDb getStartTime=0</div>
<div class="lc I" style="left:229px;top:192px">I</div><div class="lc I" style="left:256px;top:192px">03-12 12:07:01...</div><div class="lc I" style="left:389px;top:192px">6859</div><div class="lc I" style="left:440px;top:192px">13728</div><div class="lc I" style="left:572px;top:192px">SonyMetaDataManager</div><div class="lc I" style="left:788px;top:192px">setPresentEventDb channelId=200540289 type=16908544</div>
<div class="lc D" style="left:229px;top:206px">D</div><div class="lc D" style="left:256px;top:206px">03-12 12:07:01...</div><div class="lc D" style="left:389px;top:206px">6859</div><div class="lc D" style="left:440px;top:206px">13728</div><div class="lc D" style="left:572px;top:206px">MtkTvEvent</div><div class="lc D" style="left:788px;top:206px">Enter MtkTvEvent Here.</div>
<div class="lc D" style="left:229px;top:220px">D</div><div class="lc D" style="left:256px;top:220px">03-12 12:07:01...</div><div class="lc D" style="left:389px;top:220px">6859</div><div class="lc D" style="left:440px;top:220px">13728</div><div class="lc D" style="left:572px;top:220px">MtkTvUtil_jni</div><div class="lc D" style="left:788px;top:220px">a_mtktvapi_highlevel_get_market_region(4) ret 0!</div>
<div class="lc D" style="left:229px;top:234px">D</div><div class="lc D" style="left:256px;top:234px">03-12 12:07:01...</div><div class="lc D" style="left:389px;top:234px">6859</div><div class="lc D" style="left:440px;top:234px">13728</div><div class="lc D" style="left:572px;top:234px">MtkTvUtil</div><div class="lc D" style="left:788px;top:234px">getMarketRegion: PLF_OPT_REGION_EU</div>
<div class="lc D" style="left:229px;top:248px">D</div><div class="lc D" style="left:256px;top:248px">03-12 12:07:01...</div><div class="lc D" style="left:389px;top:248px">6859</div><div class="lc D" style="left:440px;top:248px">13728</div><div class="lc D" style="left:572px;top:248px">MtkTvEvent</div><div class="lc D" style="left:788px;top:248px">Enter getPresentEventInfoByChannelId, channelid = 200540289</div>
<div class="lc E" style="left:229px;top:262px">E</div><div class="lc E" style="left:256px;top:262px">03-12 12:07:01...</div><div class="lc E" style="left:389px;top:262px">6859</div><div class="lc E" style="left:440px;top:262px">13728</div><div class="lc E" style="left:572px;top:262px">MtkTvEvent_jni</div><div class="lc E" style="left:788px;top:262px">a_mtktvapi_event_get_pf_event_id failure : i4_ret = -1</div>
<div class="lc E" style="left:229px;top:276px">E</div><div class="lc E" style="left:256px;top:276px">03-12 12:07:01...</div><div class="lc E" style="left:389px;top:276px">6859</div><div class="lc E" style="left:440px;top:276px">13728</div><div class="lc E" style="left:572px;top:276px">MtkTvEvent_jni</div><div class="lc E" style="left:788px;top:276px">JNI Java_com_mediatek_twoworlds_tv_TVNative_getEventInfoByEve □</div>
<div class="lc E" style="left:788px;top:290px">ntId_lnative failure at  line 673, i4_ret, -1</div>
<div class="lc W" style="left:229px;top:304px">W</div><div class="lc W" style="left:256px;top:304px">03-12 12:07:01...</div><div class="lc W" style="left:389px;top:304px">6859</div><div class="lc W" style="left:440px;top:304px">13728</div><div class="lc W" style="left:572px;top:304px">SonyMetaDataManager</div><div class="lc W" style="left:788px;top:304px">setPresentEventDb getStartTime=0</div>
<div class="lc I" style="left:229px;top:318px">I</div><div class="lc I" style="left:256px;top:318px">03-12 12:07:02...</div><div class="lc I" style="left:389px;top:318px">6859</div><div class="lc I" style="left:440px;top:318px">13728</div><div class="lc I" style="left:572px;top:318px">SonyMetaDataManager</div><div class="lc I" style="left:788px;top:318px">setPresentEventDb channelId=200802433 type=16908544</div>
<div class="lc D" style="left:229px;top:332px">D</div><div class="lc D" style="left:256px;top:332px">03-12 12:07:02...</div><div class="lc D" style="left:389px;top:332px">6859</div><div class="lc D" style="left:440px;top:332px">13728</div><div class="lc D" style="left:572px;top:332px">MtkTvEvent</div><div class="lc D" style="left:788px;top:332px">Enter MtkTvEvent Here.</div>
<div class="lc D" style="left:229px;top:346px">D</div><div class="lc D" style="left:256px;top:346px">03-12 12:07:02...</div><div class="lc D" style="left:389px;top:346px">6859</div><div class="lc D" style="left:440px;top:346px">13728</div><div class="lc D" style="left:572px;top:346px">MtkTvUtil_jni</div><div class="lc D" style="left:788px;top:346px">a_mtktvapi_highlevel_get_market_region(4) ret 0!</div>
<div class="lc D" style="left:229px;top:360px">D</div><div class="lc D" style="left:256px;top:360px">03-12 12:07:02...</div><div class="lc D" style="left:389px;top:360px">6859</div><div class="lc D" style="left:440px;top:360px">13728</div><div class="lc D" style="left:572px;top:360px">MtkTvUtil</div><div class="lc D" style="left:788px;top:360px">getMarketRegion: PLF_OPT_REGION_EU</div>
<div class="lc D" style="left:229px;top:374px">D</div><div class="lc D" style="left:256px;top:374px">03-12 12:07:02...</div><div class="lc D" style="left:389px;top:374px">6859</div><div class="lc D" style="left:440px;top:374px">13728</div><div class="lc D" style="left:572px;top:374px">MtkTvEvent</div><div class="lc D" style="left:788px;top:374px">Enter getPresentEventInfoByChannelId, channelid = 200802433</div>
<div class="lc E" style="left:229px;top:388px">E</div><div class="lc E" style="left:256px;top:388px">03-12 12:07:02...</div><div class="lc E" style="left:389px;top:388px">6859</div><div class="lc E" style="left:440px;top:388px">13728</div><div class="lc E" style="left:572px;top:388px">MtkTvEvent_jni</div><div class="lc E" style="left:788px;top:388px">a_mtktvapi_event_get_pf_event_id failure : i4_ret = -1</div>
<div class="lc E" style="left:229px;top:402px">E</div><div class="lc E" style="left:256px;top:402px">03-12 12:07:02...</div><div class="lc E" style="left:389px;top:402px">6859</div><div class="lc E" style="left:440px;top:402px">13728</div><div class="lc E" style="left:572px;top:402px">MtkTvEvent_jni</div><div class="lc E" style="left:788px;top:402px">JNI Java_com_mediatek_twoworlds_tv_TVNative_getEventInfoByEve □</div>
<div class="lc E" style="left:788px;top:416px">ntId_lnative failure at  line 673, i4_ret, -1</div>
<div class="lc W" style="left:229px;top:430px">W</div><div class="lc W" style="left:256px;top:430px">03-12 12:07:02...</div><div class="lc W" style="left:389px;top:430px">6859</div><div class="lc W" style="left:440px;top:430px">13728</div><div class="lc W" style="left:572px;top:430px">SonyMetaDataManager</div><div class="lc W" style="left:788px;top:430px">setPresentEventDb getStartTime=0</div>
<div class="lc I" style="left:229px;top:444px">I</div><div class="lc I" style="left:256px;top:444px">03-12 12:07:02...</div><div class="lc I" style="left:389px;top:444px">6859</div><div class="lc I" style="left:440px;top:444px">13728</div><div class="lc I" style="left:572px;top:444px">SonyMetaDataManager</div><div class="lc I" style="left:788px;top:444px">setPresentEventDb channelId=201064577 type=16908544</div>
<div class="lc D" style="left:229px;top:458px">D</div><div class="lc D" style="left:256px;top:458px">03-12 12:07:02...</div><div class="lc D" style="left:389px;top:458px">6859</div><div class="lc D" style="left:440px;top:458px">13728</div><div class="lc D" style="left:572px;top:458px">MtkTvEvent</div><div class="lc D" style="left:788px;top:458px">Enter MtkTvEvent Here.</div>
<div class="lc D" style="left:229px;top:472px">D</div><div class="lc D" style="left:256px;top:472px">03-12 12:07:02...</div><div class="lc D" style="left:389px;top:472px">6859</div><div class="lc D" style="left:440px;top:472px">13728</div><div class="lc D" style="left:572px;top:472px">MtkTvUtil_jni</div><div class="lc D" style="left:788px;top:472px">a_mtktvapi_highlevel_get_market_region(4) ret 0!</div>
<div class="lc D" style="left:229px;top:486px">D</div><div class="lc D" style="left:256px;top:486px">03-12 12:07:02...</div><div class="lc D" style="left:389px;top:486px">6859</div><div class="lc D" style="left:440px;top:486px">13728</div><div class="lc D" style="left:572px;top:486px">MtkTvUtil</div><div class="lc D" style="left:788px;top:486px">getMarketRegion: PLF_OPT_REGION_EU</div>
<div class="lc D" style="left:229px;top:500px">D</div><div class="lc D" style="left:256px;top:500px">03-12 12:07:02...</div><div class="lc D" style="left:389px;top:500px">6859</div><div class="lc D" style="left:440px;top:500px">13728</div><div class="lc D" style="left:572px;top:500px">MtkTvEvent</div><div class="lc D" style="left:788px;top:500px">Enter getPresentEventInfoByChannelId, channelid = 201064577</div>
<div class="lc E" style="left:229px;top:514px">E</div><div class="lc E" style="left:256px;top:514px">03-12 12:07:02...</div><div class="lc E" style="left:389px;top:514px">6859</div><div class="lc E" style="left:440px;top:514px">13728</div><div class="lc E" style="left:572px;top:514px">MtkTvEvent_jni</div><div class="lc E" style="left:788px;top:514px">a_mtktvapi_event_get_pf_event_id failure : i4_ret = -1</div>
<div class="lc E" style="left:229px;top:528px">E</div><div class="lc E" style="left:256px;top:528px">03-12 12:07:02...</div><div class="lc E" style="left:389px;top:528px">6859</div><div class="lc E" style="left:440px;top:528px">13728</div><div class="lc E" style="left:572px;top:528px">MtkTvEvent_jni</div><div class="lc E" style="left:788px;top:528px">JNI Java_com_mediatek_twoworlds_tv_TVNative_getEventInfoByEve □</div>
<div class="lc E" style="left:788px;top:542px">ntId_lnative failure at  line 673, i4_ret, -1</div>
<div class="lc W" style="left:229px;top:556px">W</div><div class="lc W" style="left:256px;top:556px">03-12 12:07:02...</div><div class="lc W" style="left:389px;top:556px">6859</div><div class="lc W" style="left:440px;top:556px">13728</div><div class="lc W" style="left:572px;top:556px">SonyMetaDataManager</div><div class="lc W" style="left:788px;top:556px">setPresentEventDb getStartTime=0</div>

</div>


<!-- STATUS BAR -->
<div class="a" style="left:0;top:997px;width:1400px;height:23px;background:#ECE9D8">
  <div class="a" style="left:1289px;top:1px;width:1px;height:21px;background:#ACA899"></div>
  <div class="a" style="left:1290px;top:1px;width:6px;height:21px;background:#FBFBF3"></div>
  <div class="a" style="left:1296px;top:1px;width:1px;height:21px;background:#ACA899"></div>
  <div class="a" style="left:0;top:22px;width:1400px;height:1px;background:#FAFAF5"></div>
  <div class="a" style="left:1383px;top:2px;width:1px;height:20px;background:#D5D1C0"></div>
  <div class="t" style="left:1306px;top:6px">34M of 495M</div>
  <svg class="a" style="left:1386px;top:3px" width="14" height="18"><path d="M1 4H13" stroke="#3F7A9A" stroke-width="2"/><path d="M5 2H9" stroke="#3F7A9A" stroke-width="2"/><path d="M2 5L3 17H11L12 5Z" fill="#7FB5CF" stroke="#3F7A9A"/><path d="M5 7V15M7 7V15M9 7V15" stroke="#3F7A9A"/></svg>
</div>
<!-- TASKBAR -->
<div class="a" style="left:0;top:1020px;width:1400px;height:30px;background:linear-gradient(#2A52A8 0,#2A52A8 1px,#4A90F2 1.5px,#4A90F2 3px,#2E6EE0 5px,#1E55D0 7px,#2058D6 18px,#2262E2 25px,#1E58D4 28px,#1840B0 30px)">
  <div class="a" style="left:0;top:0;width:114px;height:30px;border-radius:0 10px 10px 0;background:linear-gradient(#4E9A54 0,#8ACB8A 1.5px,#5BB55B 3px,#3AA63A 6px,#2F9A2F 14px,#2F9E32 22px,#258A2A 27px,#1B6B24 30px);box-shadow:inset -2px 0 3px #1F6A22"></div>
  <svg class="a" style="left:9px;top:4px" width="22" height="22"><path d="M4.5 2.5Q8 0.5 12.5 2.5L11.5 10Q8 8.5 3.5 10Z" fill="#F26B1D"/><path d="M13.5 3Q17 4.5 21 3L20 11Q16.5 12 12.5 10.5Z" fill="#8CD316"/><path d="M3.5 11Q7.5 9.5 11.5 11.5L10.5 19Q6.5 17 2 19Z" fill="#5A8CF0"/><path d="M12.5 12Q16 13.5 20 12L19 20Q15 21.5 11.5 19.5Z" fill="#F5CC10"/></svg>
  <div class="t" style="left:35px;top:6px;color:#fff;font-style:italic;font-weight:bold;font-size:16px;line-height:18px;text-shadow:1px 1px 1px #1A4A1A">έναρξη</div>
  <div class="a" style="left:125px;top:4px;width:157px;height:24px;border-radius:3px;background:linear-gradient(#4C8EF8,#3C81F3 40%,#3777EC)"></div>
  <svg class="a" style="left:134px;top:8px" width="15" height="15"><circle cx="7.5" cy="7.5" r="6.5" fill="#3A6CC0"/><path d="M1.5 4Q0.5 10 5 13.5Q10 15.5 13.5 11Q15.5 7 13 3Q12 6 9.5 6.5Q11 9.5 8 10.5Q4.5 11 3.5 8Q3 6 1.5 4Z" fill="#E8701A"/><path d="M12.5 2.5Q9 0 5 1.5Q8 2.5 9.5 4.5Q11.5 4 12.5 2.5Z" fill="#F0A030"/></svg>
  <div class="t" style="left:153px;top:9px;color:#fff">Solved: Developer Fu...</div>
  <div class="a" style="left:285px;top:4px;width:157px;height:24px;border-radius:3px;background:linear-gradient(#4C8EF8,#3C81F3 40%,#3777EC)"></div>
  <svg class="a" style="left:294px;top:8px" width="16" height="15"><path d="M1 2.5H6L7.5 4H14.5V13H1Z" fill="#D8A830" stroke="#A07818" stroke-width="0.8"/><path d="M1 6H15L14 13.5H1Z" fill="#F8E080" stroke="#B89028" stroke-width="0.8"/></svg>
  <div class="t" style="left:314px;top:9px;color:#fff">tools</div>
  <div class="a" style="left:445px;top:4px;width:157px;height:24px;border-radius:3px;background:linear-gradient(#4C8EF8,#3C81F3 40%,#3777EC)"></div>
  <div class="a" style="left:454px;top:11px;width:15px;height:10px;background:#000;border:1px solid #888"></div>
  <div class="t" style="left:455px;top:10px;color:#fff;font-size:7px;font-weight:bold">C:\</div>
  <div class="t" style="left:473px;top:9px;color:#fff">Command Prompt</div>
  <div class="a" style="left:605px;top:4px;width:158px;height:24px;border-radius:3px;background:linear-gradient(#1E4CB8,#1C4DC0 50%,#2157D0);box-shadow:inset 1px 1px 2px #102E80"></div>
  <div class="a" style="left:616px;top:8px;width:15px;height:15px;border-radius:50%;background:radial-gradient(circle at 55% 45%,#C9D870,#6A7A40 60%,#2E3A20)"></div>
  <div class="t" style="left:634px;top:9px;color:#fff">Android Device Monitor</div>
  <!-- tray -->
  <div class="a" style="left:1292px;top:0;width:108px;height:30px;background:linear-gradient(#1290E8 0,#27A6F5 3px,#1795EC 8px,#0E8BE6 25px,#0A78D8 30px);border-left:1px solid #0A4EB8"></div>
  <div class="t" style="left:1266px;top:9px;color:#fff">EN</div>
  <div class="a" style="left:1284px;top:6px;width:19px;height:19px;border-radius:50%;background:radial-gradient(circle at 40% 35%,#9CD0FF,#2A7AE8 60%,#1A50B8);border:1px solid #B8DCFF"></div>
  <svg class="a" style="left:1288px;top:10px" width="10" height="11"><path d="M7 1.5L3 5.5L7 9.5" stroke="#fff" stroke-width="2.2" fill="none"/></svg>
  <svg class="a" style="left:1302px;top:5px" width="18" height="18"><rect x="1" y="6" width="7" height="6" fill="#B8D8F8" stroke="#E8F4FF"/><rect x="2" y="12" width="6" height="3" fill="#D8E8F8"/><path d="M10 7Q12 9 10 11M12 5Q15 9 12 13M14 3Q18 9 14 15" stroke="#4CD83C" stroke-width="1.4" fill="none"/></svg>
  <svg class="a" style="left:1322px;top:6px" width="17" height="17"><rect x="2.5" y="1.5" width="12" height="9" fill="#8C8C8C" stroke="#3A3A3A"/><rect x="3.5" y="2.5" width="10" height="7" fill="#A8A8A8"/><rect x="1" y="11" width="15" height="4" rx="1" fill="#E8E8E8" stroke="#3A3A3A"/></svg>
  <div class="t" style="left:1344px;top:9px;color:#fff">12:07 μμ</div>
</div>

<!-- CHART -->
<svg class="a" style="left:0;top:0" width="1400" height="400"><circle cx="918" cy="281" r="89" fill="#8A8A8A"/><path d="M914 277L914.00 188.00A89 89 0 0 1 965.43 204.36Z" fill="#FF5454" stroke="#6A6A6A" stroke-width="0.8"/><path d="M914 277L965.43 204.36A89 89 0 0 1 980.66 218.03Z" fill="#5454FF" stroke="#6A6A6A" stroke-width="0.8"/><path d="M914 277L980.66 218.03A89 89 0 0 1 1000.20 299.13Z" fill="#54FF54" stroke="#6A6A6A" stroke-width="0.8"/><path d="M914 277L1000.20 299.13A89 89 0 0 1 991.08 321.50Z" fill="#FFFF54" stroke="#6A6A6A" stroke-width="0.8"/><path d="M914 277L991.08 321.50A89 89 0 0 1 978.77 338.04Z" fill="#FF54FF" stroke="#6A6A6A" stroke-width="0.8"/><path d="M914 277L978.77 338.04A89 89 0 1 1 914.00 188.00Z" fill="#54FFFF" stroke="#6A6A6A" stroke-width="0.8"/><g fill="none" stroke="#1A1A1A" stroke-width="1.2"><path d="M938 201L942.5 188H1023"/><path d="M968 217L977 208H1028"/><path d="M993 258.5L1004 256H1031"/><path d="M988.5 307.5L1001 313H1031"/><path d="M978.5 325L990 333.5H1029"/><path d="M840.5 309L827 315.5H797"/></g><rect x="1023.5" y="179.5" width="26" height="17" fill="#FFFFC4" stroke="#2A2A2A" stroke-width="1.4"/><text x="1025.5" y="193.6" font-family="Liberation Sans" font-size="10" fill="#000" textLength="20" lengthAdjust="spacingAndGlyphs">Free</text><rect x="1028.5" y="199.5" width="36" height="17" fill="#FFFFC4" stroke="#2A2A2A" stroke-width="1.4"/><text x="1030.5" y="213.6" font-family="Liberation Sans" font-size="10" fill="#000" textLength="30" lengthAdjust="spacingAndGlyphs">Buffers</text><rect x="1031.5" y="247.5" width="39" height="17" fill="#FFFFC4" stroke="#2A2A2A" stroke-width="1.4"/><text x="1033.5" y="261.6" font-family="Liberation Sans" font-size="10" fill="#000" textLength="33" lengthAdjust="spacingAndGlyphs">Inactive</text><rect x="1031.5" y="304.5" width="24" height="17" fill="#FFFFC4" stroke="#2A2A2A" stroke-width="1.4"/><text x="1033.5" y="318.6" font-family="Liberation Sans" font-size="10" fill="#000" textLength="18" lengthAdjust="spacingAndGlyphs">Slab</text><rect x="1029.5" y="325.5" width="58" height="17" fill="#FFFFC4" stroke="#2A2A2A" stroke-width="1.4"/><text x="1031.5" y="339.6" font-family="Liberation Sans" font-size="10" fill="#000" textLength="52" lengthAdjust="spacingAndGlyphs">PageTables</text><rect x="751.5" y="307.5" width="46" height="17" fill="#FFFFC4" stroke="#2A2A2A" stroke-width="1.4"/><text x="753.5" y="321.6" font-family="Liberation Sans" font-size="10" fill="#000" textLength="40" lengthAdjust="spacingAndGlyphs">Unknown</text></svg>
</body></html>
